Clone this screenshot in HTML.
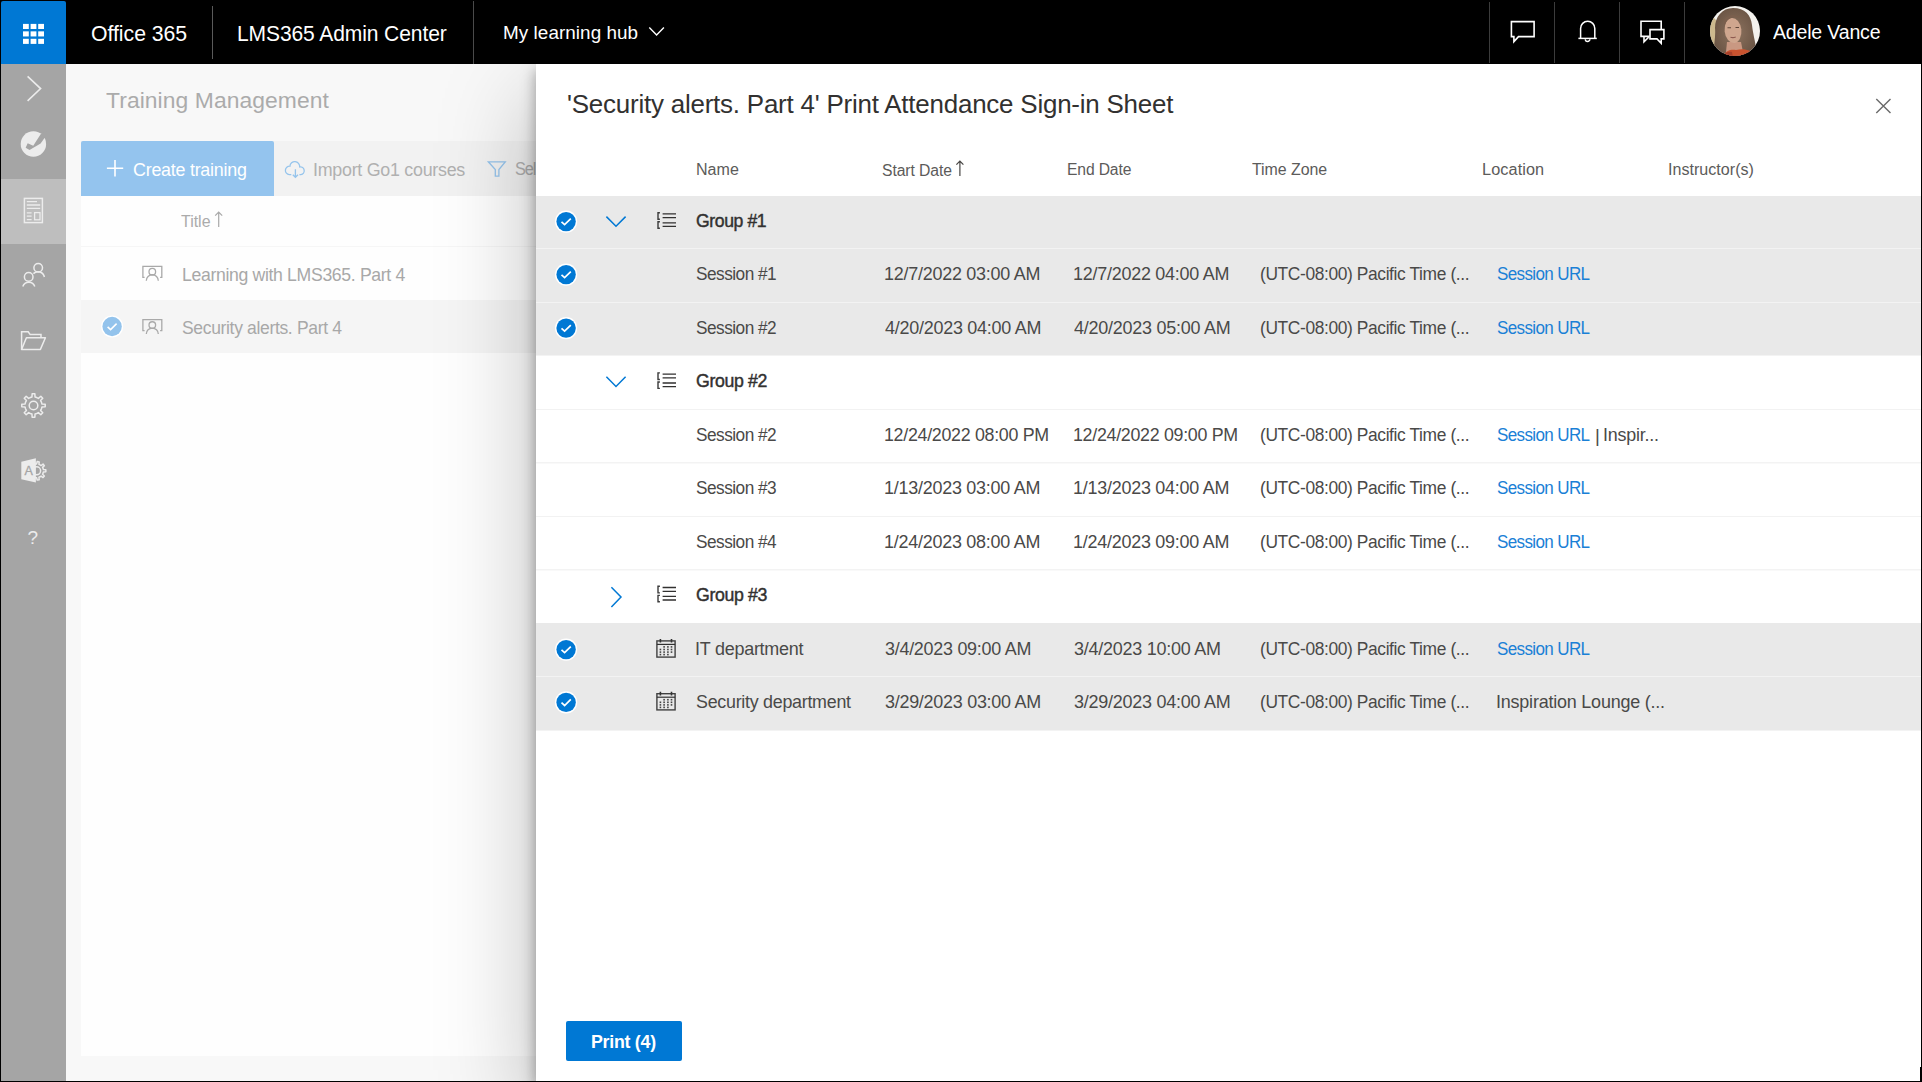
<!DOCTYPE html>
<html><head><meta charset="utf-8"><title>LMS365 Admin Center</title>
<style>
html,body{margin:0;padding:0}
body{width:1922px;height:1082px;overflow:hidden;position:relative;background:#000;font-family:"Liberation Sans",sans-serif}
.a{position:absolute}
.t{position:absolute;white-space:nowrap;font-family:"Liberation Sans",sans-serif}
svg{position:absolute;overflow:visible}
</style></head><body>

<!-- left rail + main content (dimmed by overlay) -->
<div class="a" style="left:0;top:0;z-index:0">
<div class="a" style="left:1px;top:64px;width:65px;height:1017px;background:#a5a5a5"></div>
<div class="a" style="left:1px;top:179px;width:65px;height:65px;background:#bebebe"></div>
<div class="a" style="left:66px;top:64px;width:470px;height:1017px;background:#f8f8f8"></div>
<div class="a" style="left:81px;top:141px;width:455px;height:55px;background:#f2f2f2"></div>
<div class="a" style="left:81px;top:141px;width:193px;height:55px;background:#94c4ee;border-radius:2px 2px 0 0"></div>
<div class="a" style="left:81px;top:196px;width:455px;height:860px;background:#fefefe"></div>
<div class="a" style="left:81px;top:246px;width:455px;height:1px;background:#f6f6f6"></div>
<div class="a" style="left:81px;top:300px;width:455px;height:53px;background:#f5f5f5"></div>
</div>
<div class="a" style="left:0;top:0;z-index:1"><svg width="1922" height="1082" style="left:0;top:0"><polyline points="27.6,76.3 40.6,88.6 27.6,100.9" fill="none" stroke="#ececec" stroke-width="1.6"/>
<circle cx="33.4" cy="144" r="12.7" fill="#ececec"/>
<polygon points="25.65,147.66 27.68,143.22 33.22,145.81 40.8,133.98 47.3,131.4 47.3,138.05 44.5,138.05 40.62,143.59 29.53,149.88" fill="#a5a5a5"/>
<rect x="24.4" y="198.4" width="18" height="24.2" fill="none" stroke="#ececec" stroke-width="1.5"/>
<path d="M26.8 201.6 H37 M26.8 205 H40.2 M26.8 208.4 H40.2 M26.8 212.8 H31.6 M26.8 216.2 H31.6 M26.8 219.6 H31.6" stroke="#ececec" stroke-width="1.3"/>
<rect x="34.6" y="212.6" width="5.4" height="7.2" fill="none" stroke="#ececec" stroke-width="1.3"/>
<circle cx="28.7" cy="276.9" r="4.3" fill="none" stroke="#ececec" stroke-width="1.5"/>
<path d="M22.8 286.6 A6.3 6.3 0 0 1 34.8 286.6" fill="none" stroke="#ececec" stroke-width="1.5"/>
<circle cx="38.2" cy="267.8" r="4.3" fill="none" stroke="#ececec" stroke-width="1.5"/>
<path d="M33.4 273.6 A6.5 6.5 0 0 1 44.4 277" fill="none" stroke="#ececec" stroke-width="1.5"/>
<path d="M21.6 349.4 V331.8 H28.2 L30.2 334.6 H41 V337.6" fill="none" stroke="#ececec" stroke-width="1.5"/>
<path d="M21.6 349.4 L26.4 337.8 H45.4 L40.4 349.4 Z" fill="none" stroke="#ececec" stroke-width="1.5" stroke-linejoin="round"/>
<path d="M41.45 402.21 L41.96 403.95 L45.22 404.14 L45.22 406.86 L41.96 407.05 L41.45 408.79 L40.58 410.38 L42.75 412.83 L40.83 414.75 L38.38 412.58 L36.79 413.45 L35.05 413.96 L34.86 417.22 L32.14 417.22 L31.95 413.96 L30.21 413.45 L28.62 412.58 L26.17 414.75 L24.25 412.83 L26.42 410.38 L25.55 408.79 L25.04 407.05 L21.78 406.86 L21.78 404.14 L25.04 403.95 L25.55 402.21 L26.42 400.62 L24.25 398.17 L26.17 396.25 L28.62 398.42 L30.21 397.55 L31.95 397.04 L32.14 393.78 L34.86 393.78 L35.05 397.04 L36.79 397.55 L38.38 398.42 L40.83 396.25 L42.75 398.17 L40.58 400.62 Z" fill="none" stroke="#ececec" stroke-width="1.5" stroke-linejoin="round"/>
<circle cx="33.5" cy="405.5" r="4.3" fill="none" stroke="#ececec" stroke-width="1.5"/>
<path d="M43.08 468.44 L43.40 469.61 L45.84 469.78 L45.84 471.82 L43.40 471.99 L43.08 473.16 L42.57 474.26 L44.34 475.96 L43.03 477.52 L41.04 476.08 L40.05 476.78 L38.95 477.29 L39.21 479.73 L37.20 480.08 L36.61 477.70 L35.40 477.60 L34.23 477.28 L32.86 479.32 L31.09 478.30 L32.17 476.09 L31.31 475.24 L30.62 474.24 L28.26 474.92 L27.56 473.00 L29.81 472.01 L29.70 470.80 L29.81 469.59 L27.56 468.60 L28.26 466.68 L30.62 467.36 L31.31 466.36 L32.17 465.51 L31.09 463.30 L32.86 462.28 L34.23 464.32 L35.40 464.00 L36.61 463.90 L37.20 461.52 L39.21 461.87 L38.95 464.31 L40.05 464.82 L41.04 465.52 L43.03 464.08 L44.34 465.64 L42.57 467.34 Z" fill="none" stroke="#ececec" stroke-width="1.5" stroke-linejoin="round"/>
<circle cx="36.6" cy="470.8" r="4.0" fill="none" stroke="#ececec" stroke-width="1.5"/>
<path d="M21.3 461.8 L35.9 458.2 V482.6 L21.3 479.3 Z" fill="#ececec"/>
<text x="24.6" y="475.3" font-family="Liberation Sans" font-size="12.5" fill="#a5a5a5" stroke="#a5a5a5" stroke-width="0.3">A</text>
<text x="27.6" y="543.8" font-family="Liberation Sans" font-size="19" fill="#ececec">?</text>
<path d="M115 160 V176.4 M106.9 168.2 H123.2" stroke="#fff" stroke-width="1.6"/>
<path d="M291.3 174.6 H289.3 A4.2 4.2 0 0 1 289.9 166.2 A4.7 4.7 0 0 1 299.7 166.9 A3.85 3.85 0 0 1 300.9 174.6 H299.4" fill="none" stroke="#95c4ec" stroke-width="1.3"/>
<path d="M295.4 169.3 V177.3 M292.8 174.7 L295.4 177.3 L298 174.7" fill="none" stroke="#95c4ec" stroke-width="1.3"/>
<path d="M488.3 161.8 H505.3 L498.9 169.6 V176.2 H495.3 V169.6 Z" fill="none" stroke="#95c4ec" stroke-width="1.3" stroke-linejoin="miter"/>
<path d="M218.7 227 V212.2 M215.2 215.6 L218.7 212 L222.2 215.6" fill="none" stroke="#a9a9a9" stroke-width="1.2"/>
<path d="M144.6 277.30 H142.9 V266.30 H161.8 V277.30 H160.1" fill="none" stroke="#a9a9a9" stroke-width="1.3"/>
<circle cx="152.3" cy="271.70" r="3.3" fill="none" stroke="#a9a9a9" stroke-width="1.3"/>
<path d="M146.3 280.70 A6 6 0 0 1 158.3 280.70" fill="none" stroke="#a9a9a9" stroke-width="1.3"/>
<path d="M144.6 330.63 H142.9 V319.63 H161.8 V330.63 H160.1" fill="none" stroke="#a9a9a9" stroke-width="1.3"/>
<circle cx="152.3" cy="325.03" r="3.3" fill="none" stroke="#a9a9a9" stroke-width="1.3"/>
<path d="M146.3 334.03 A6 6 0 0 1 158.3 334.03" fill="none" stroke="#a9a9a9" stroke-width="1.3"/>
<circle cx="112.1" cy="326.5" r="11" fill="#fff"/><circle cx="112.1" cy="326.5" r="9.7" fill="#93c3ec"/>
<polyline points="107.6,326.8 110.6,329.6 116.6,323.6" fill="none" stroke="#fff" stroke-width="1.6"/></svg><div class="t" style="left:105.90px;top:89.00px;font-size:22.67px;line-height:22.67px;font-weight:400;color:#ababab;letter-spacing:0.074px;transform:scaleX(1.0091);transform-origin:0 0;">Training Management</div>
<div class="t" style="left:133.20px;top:161.00px;font-size:18.67px;line-height:18.67px;font-weight:400;color:#fff;letter-spacing:-0.253px;transform:scaleX(0.9582);transform-origin:0 0;">Create training</div>
<div class="t" style="left:313.20px;top:161.00px;font-size:18.67px;line-height:18.67px;font-weight:400;color:#b0b0b0;letter-spacing:-0.283px;transform:scaleX(0.9575);transform-origin:0 0;">Import Go1 courses</div>
<div class="t" style="left:515.00px;top:160.00px;font-size:18.67px;line-height:18.67px;font-weight:400;color:#b0b0b0;letter-spacing:-1.214px;transform:scaleX(0.8764);transform-origin:0 0;">Sel</div>
<div class="t" style="left:181.00px;top:214.00px;font-size:16px;line-height:16px;font-weight:400;color:#ababab;letter-spacing:-0.013px;transform:scaleX(0.9973);transform-origin:0 0;">Title</div>
<div class="t" style="left:181.60px;top:266.00px;font-size:18.67px;line-height:18.67px;font-weight:400;color:#a8a8a8;letter-spacing:-0.351px;transform:scaleX(0.9450);transform-origin:0 0;">Learning with LMS365. Part 4</div>
<div class="t" style="left:182.40px;top:319.00px;font-size:18.67px;line-height:18.67px;font-weight:400;color:#a8a8a8;letter-spacing:-0.356px;transform:scaleX(0.9381);transform-origin:0 0;">Security alerts. Part 4</div></div>

<!-- panel -->
<div class="a" style="left:0;top:0;z-index:2">
<div class="a" style="left:536px;top:64px;width:1385px;height:1017px;background:#fff;box-shadow:0 34px 90px rgba(0,0,0,0.27), 0 6px 14px rgba(0,0,0,0.36)"></div>
<div class="a" style="left:536px;top:196px;width:1385px;height:159px;background:#e9e9e9"></div>
<div class="a" style="left:536px;top:355px;width:1385px;height:1px;background:#f3f3f3"></div>
<div class="a" style="left:536px;top:248px;width:1385px;height:1px;background:#f3f3f3"></div>
<div class="a" style="left:536px;top:302px;width:1385px;height:1px;background:#f3f3f3"></div>
<div class="a" style="left:536px;top:409px;width:1385px;height:1px;background:#f2f2f2"></div>
<div class="a" style="left:536px;top:462px;width:1385px;height:1px;background:#f3f3f3"></div>
<div class="a" style="left:536px;top:463px;width:1385px;height:1px;background:#f9f9f9"></div>
<div class="a" style="left:536px;top:516px;width:1385px;height:1px;background:#f2f2f2"></div>
<div class="a" style="left:536px;top:569px;width:1385px;height:1px;background:#f3f3f3"></div>
<div class="a" style="left:536px;top:570px;width:1385px;height:1px;background:#f9f9f9"></div>
<div class="a" style="left:536px;top:623px;width:1385px;height:107px;background:#e9e9e9"></div>
<div class="a" style="left:536px;top:676px;width:1385px;height:1px;background:#f3f3f3"></div>
<div class="a" style="left:536px;top:730px;width:1385px;height:1px;background:#f3f3f3"></div>
<div class="a" style="left:566px;top:1021px;width:116px;height:40px;background:#0078d4;border-radius:2px"></div>
</div>
<div class="a" style="left:0;top:0;z-index:3"><svg width="1922" height="1082" style="left:0;top:0"><circle cx="566.1" cy="221.60" r="11.1" fill="#fff"/><circle cx="566.1" cy="221.60" r="9.7" fill="#0078d4"/>
<polyline points="561.5,221.90 564.6,224.70 570.8,218.60" fill="none" stroke="#fff" stroke-width="1.7"/>
<circle cx="566.1" cy="274.60" r="11.1" fill="#fff"/><circle cx="566.1" cy="274.60" r="9.7" fill="#0078d4"/>
<polyline points="561.5,274.90 564.6,277.70 570.8,271.60" fill="none" stroke="#fff" stroke-width="1.7"/>
<circle cx="566.1" cy="328.10" r="11.1" fill="#fff"/><circle cx="566.1" cy="328.10" r="9.7" fill="#0078d4"/>
<polyline points="561.5,328.40 564.6,331.20 570.8,325.10" fill="none" stroke="#fff" stroke-width="1.7"/>
<circle cx="566.1" cy="649.60" r="11.1" fill="#fff"/><circle cx="566.1" cy="649.60" r="9.7" fill="#0078d4"/>
<polyline points="561.5,649.90 564.6,652.70 570.8,646.60" fill="none" stroke="#fff" stroke-width="1.7"/>
<circle cx="566.1" cy="702.40" r="11.1" fill="#fff"/><circle cx="566.1" cy="702.40" r="9.7" fill="#0078d4"/>
<polyline points="561.5,702.70 564.6,705.50 570.8,699.40" fill="none" stroke="#fff" stroke-width="1.7"/>
<polyline points="606.4,216.60 616,226.30 625.6,216.60" fill="none" stroke="#0078d4" stroke-width="1.5"/>
<path d="M659.9 212.70 H658 V219.30 H659.9 M659.9 221.80 H658 V228.20 H659.9" fill="none" stroke="#3a3a3a" stroke-width="1.4"/>
<path d="M662.6 213.90 H676 M662.6 217.70 H676 M662.6 222.80 H676 M662.6 226.40 H676" fill="none" stroke="#323130" stroke-width="1.3"/>
<polyline points="606.4,376.80 616,386.50 625.6,376.80" fill="none" stroke="#0078d4" stroke-width="1.5"/>
<path d="M659.9 372.90 H658 V379.50 H659.9 M659.9 382.00 H658 V388.40 H659.9" fill="none" stroke="#3a3a3a" stroke-width="1.4"/>
<path d="M662.6 374.10 H676 M662.6 377.90 H676 M662.6 383.00 H676 M662.6 386.60 H676" fill="none" stroke="#323130" stroke-width="1.3"/>
<polyline points="611.4,587.30 621,597.10 611.4,606.90" fill="none" stroke="#0078d4" stroke-width="1.5"/>
<path d="M659.9 586.30 H658 V592.90 H659.9 M659.9 595.40 H658 V601.80 H659.9" fill="none" stroke="#3a3a3a" stroke-width="1.4"/>
<path d="M662.6 587.50 H676 M662.6 591.30 H676 M662.6 596.40 H676 M662.6 600.00 H676" fill="none" stroke="#323130" stroke-width="1.3"/>
<rect x="656.9" y="640.90" width="18.2" height="16.2" fill="none" stroke="#404040" stroke-width="1.4"/>
<path d="M656.9 644.40 H675.1" fill="none" stroke="#303030" stroke-width="1.2"/>
<path d="M660.4 639.00 V642.60 M671.5 639.00 V642.60" fill="none" stroke="#333" stroke-width="1.6"/>
<rect x="663.30" y="646.10" width="1.6" height="1.6" fill="#444"/><rect x="667.10" y="646.10" width="1.6" height="1.6" fill="#444"/><rect x="670.70" y="646.10" width="1.6" height="1.6" fill="#444"/><rect x="659.60" y="648.70" width="1.6" height="1.6" fill="#444"/><rect x="663.30" y="648.70" width="1.6" height="1.6" fill="#444"/><rect x="667.10" y="648.70" width="1.6" height="1.6" fill="#444"/><rect x="670.70" y="648.70" width="1.6" height="1.6" fill="#444"/><rect x="659.60" y="651.30" width="1.6" height="1.6" fill="#444"/><rect x="663.30" y="651.30" width="1.6" height="1.6" fill="#444"/><rect x="667.10" y="651.30" width="1.6" height="1.6" fill="#444"/><rect x="670.70" y="651.30" width="1.6" height="1.6" fill="#444"/><rect x="659.60" y="653.80" width="1.6" height="1.6" fill="#444"/><rect x="663.30" y="653.80" width="1.6" height="1.6" fill="#444"/><rect x="667.10" y="653.80" width="1.6" height="1.6" fill="#444"/>
<rect x="656.9" y="693.70" width="18.2" height="16.2" fill="none" stroke="#404040" stroke-width="1.4"/>
<path d="M656.9 697.20 H675.1" fill="none" stroke="#303030" stroke-width="1.2"/>
<path d="M660.4 691.80 V695.40 M671.5 691.80 V695.40" fill="none" stroke="#333" stroke-width="1.6"/>
<rect x="663.30" y="698.90" width="1.6" height="1.6" fill="#444"/><rect x="667.10" y="698.90" width="1.6" height="1.6" fill="#444"/><rect x="670.70" y="698.90" width="1.6" height="1.6" fill="#444"/><rect x="659.60" y="701.50" width="1.6" height="1.6" fill="#444"/><rect x="663.30" y="701.50" width="1.6" height="1.6" fill="#444"/><rect x="667.10" y="701.50" width="1.6" height="1.6" fill="#444"/><rect x="670.70" y="701.50" width="1.6" height="1.6" fill="#444"/><rect x="659.60" y="704.10" width="1.6" height="1.6" fill="#444"/><rect x="663.30" y="704.10" width="1.6" height="1.6" fill="#444"/><rect x="667.10" y="704.10" width="1.6" height="1.6" fill="#444"/><rect x="670.70" y="704.10" width="1.6" height="1.6" fill="#444"/><rect x="659.60" y="706.60" width="1.6" height="1.6" fill="#444"/><rect x="663.30" y="706.60" width="1.6" height="1.6" fill="#444"/><rect x="667.10" y="706.60" width="1.6" height="1.6" fill="#444"/>
<path d="M1876.3 98.9 L1890.5 113.1 M1890.5 98.9 L1876.3 113.1" stroke="#6a6a6a" stroke-width="1.4"/>
<path d="M959.9 176 V161.2 M956.4 164.6 L959.9 161 L963.4 164.6" fill="none" stroke="#484644" stroke-width="1.2"/></svg><div class="t" style="left:566.80px;top:91.00px;font-size:26.67px;line-height:26.67px;font-weight:400;color:#323130;letter-spacing:-0.217px;transform:scaleX(0.9726);transform-origin:0 0;">&#x27;Security alerts. Part 4&#x27; Print Attendance Sign-in Sheet</div>
<div class="t" style="left:695.80px;top:162.00px;font-size:16px;line-height:16px;font-weight:400;color:#5c5b5a;letter-spacing:0.016px;transform:scaleX(1.0017);transform-origin:0 0;">Name</div>
<div class="t" style="left:881.60px;top:163.00px;font-size:16px;line-height:16px;font-weight:400;color:#5c5b5a;letter-spacing:-0.097px;transform:scaleX(0.9823);transform-origin:0 0;">Start Date</div>
<div class="t" style="left:1066.60px;top:162.00px;font-size:16px;line-height:16px;font-weight:400;color:#5c5b5a;letter-spacing:-0.135px;transform:scaleX(0.9789);transform-origin:0 0;">End Date</div>
<div class="t" style="left:1251.90px;top:162.00px;font-size:16px;line-height:16px;font-weight:400;color:#5c5b5a;letter-spacing:-0.034px;transform:scaleX(0.9947);transform-origin:0 0;">Time Zone</div>
<div class="t" style="left:1482.40px;top:162.00px;font-size:16px;line-height:16px;font-weight:400;color:#5c5b5a;letter-spacing:0.090px;transform:scaleX(1.0164);transform-origin:0 0;">Location</div>
<div class="t" style="left:1668.00px;top:162.00px;font-size:16px;line-height:16px;font-weight:400;color:#5c5b5a;letter-spacing:0.019px;transform:scaleX(1.0042);transform-origin:0 0;">Instructor(s)</div>
<div class="t" style="left:696.20px;top:212.00px;font-size:18.67px;line-height:18.67px;font-weight:400;color:#323130;letter-spacing:-0.436px;transform:scaleX(0.9441);transform-origin:0 0;-webkit-text-stroke:0.45px #323130;">Group #1</div>
<div class="t" style="left:696.00px;top:265.00px;font-size:18.67px;line-height:18.67px;font-weight:400;color:#4a4948;letter-spacing:-0.559px;transform:scaleX(0.9241);transform-origin:0 0;">Session #1</div>
<div class="t" style="left:884.40px;top:265.00px;font-size:18.67px;line-height:18.67px;font-weight:400;color:#4a4948;letter-spacing:-0.257px;transform:scaleX(0.9622);transform-origin:0 0;">12/7/2022 03:00 AM</div>
<div class="t" style="left:1072.90px;top:265.00px;font-size:18.67px;line-height:18.67px;font-weight:400;color:#4a4948;letter-spacing:-0.257px;transform:scaleX(0.9622);transform-origin:0 0;">12/7/2022 04:00 AM</div>
<div class="t" style="left:1260.40px;top:265.00px;font-size:18.67px;line-height:18.67px;font-weight:400;color:#4a4948;letter-spacing:-0.410px;transform:scaleX(0.9317);transform-origin:0 0;">(UTC-08:00) Pacific Time (...</div>
<div class="t" style="left:1496.70px;top:265.00px;font-size:18.67px;line-height:18.67px;font-weight:400;color:#1a80d6;letter-spacing:-0.693px;transform:scaleX(0.9126);transform-origin:0 0;">Session URL</div>
<div class="t" style="left:696.00px;top:319.00px;font-size:18.67px;line-height:18.67px;font-weight:400;color:#4a4948;letter-spacing:-0.559px;transform:scaleX(0.9241);transform-origin:0 0;">Session #2</div>
<div class="t" style="left:885.40px;top:319.00px;font-size:18.67px;line-height:18.67px;font-weight:400;color:#4a4948;letter-spacing:-0.259px;transform:scaleX(0.9621);transform-origin:0 0;">4/20/2023 04:00 AM</div>
<div class="t" style="left:1073.90px;top:319.00px;font-size:18.67px;line-height:18.67px;font-weight:400;color:#4a4948;letter-spacing:-0.254px;transform:scaleX(0.9628);transform-origin:0 0;">4/20/2023 05:00 AM</div>
<div class="t" style="left:1260.40px;top:319.00px;font-size:18.67px;line-height:18.67px;font-weight:400;color:#4a4948;letter-spacing:-0.410px;transform:scaleX(0.9317);transform-origin:0 0;">(UTC-08:00) Pacific Time (...</div>
<div class="t" style="left:1496.70px;top:319.00px;font-size:18.67px;line-height:18.67px;font-weight:400;color:#1a80d6;letter-spacing:-0.693px;transform:scaleX(0.9126);transform-origin:0 0;">Session URL</div>
<div class="t" style="left:696.20px;top:372.00px;font-size:18.67px;line-height:18.67px;font-weight:400;color:#323130;letter-spacing:-0.385px;transform:scaleX(0.9503);transform-origin:0 0;-webkit-text-stroke:0.45px #323130;">Group #2</div>
<div class="t" style="left:696.00px;top:426.00px;font-size:18.67px;line-height:18.67px;font-weight:400;color:#4a4948;letter-spacing:-0.559px;transform:scaleX(0.9241);transform-origin:0 0;">Session #2</div>
<div class="t" style="left:884.40px;top:426.00px;font-size:18.67px;line-height:18.67px;font-weight:400;color:#4a4948;letter-spacing:-0.306px;transform:scaleX(0.9553);transform-origin:0 0;">12/24/2022 08:00 PM</div>
<div class="t" style="left:1072.90px;top:426.00px;font-size:18.67px;line-height:18.67px;font-weight:400;color:#4a4948;letter-spacing:-0.306px;transform:scaleX(0.9553);transform-origin:0 0;">12/24/2022 09:00 PM</div>
<div class="t" style="left:1260.40px;top:426.00px;font-size:18.67px;line-height:18.67px;font-weight:400;color:#4a4948;letter-spacing:-0.410px;transform:scaleX(0.9317);transform-origin:0 0;">(UTC-08:00) Pacific Time (...</div>
<div class="t" style="left:1496.70px;top:426.00px;font-size:18.67px;line-height:18.67px;font-weight:400;color:#1a80d6;letter-spacing:-0.693px;transform:scaleX(0.9126);transform-origin:0 0;">Session URL</div>
<div class="t" style="left:1595.00px;top:427.00px;font-size:18.67px;line-height:18.67px;font-weight:400;color:#4a4948;letter-spacing:0.000px;">|</div>
<div class="t" style="left:1603.40px;top:426.00px;font-size:18.67px;line-height:18.67px;font-weight:400;color:#4a4948;letter-spacing:-0.212px;transform:scaleX(0.9580);transform-origin:0 0;">Inspir...</div>
<div class="t" style="left:696.00px;top:479.00px;font-size:18.67px;line-height:18.67px;font-weight:400;color:#4a4948;letter-spacing:-0.559px;transform:scaleX(0.9241);transform-origin:0 0;">Session #3</div>
<div class="t" style="left:884.40px;top:479.00px;font-size:18.67px;line-height:18.67px;font-weight:400;color:#4a4948;letter-spacing:-0.257px;transform:scaleX(0.9622);transform-origin:0 0;">1/13/2023 03:00 AM</div>
<div class="t" style="left:1072.90px;top:479.00px;font-size:18.67px;line-height:18.67px;font-weight:400;color:#4a4948;letter-spacing:-0.257px;transform:scaleX(0.9622);transform-origin:0 0;">1/13/2023 04:00 AM</div>
<div class="t" style="left:1260.40px;top:479.00px;font-size:18.67px;line-height:18.67px;font-weight:400;color:#4a4948;letter-spacing:-0.410px;transform:scaleX(0.9317);transform-origin:0 0;">(UTC-08:00) Pacific Time (...</div>
<div class="t" style="left:1496.70px;top:479.00px;font-size:18.67px;line-height:18.67px;font-weight:400;color:#1a80d6;letter-spacing:-0.693px;transform:scaleX(0.9126);transform-origin:0 0;">Session URL</div>
<div class="t" style="left:696.00px;top:533.00px;font-size:18.67px;line-height:18.67px;font-weight:400;color:#4a4948;letter-spacing:-0.559px;transform:scaleX(0.9241);transform-origin:0 0;">Session #4</div>
<div class="t" style="left:884.40px;top:533.00px;font-size:18.67px;line-height:18.67px;font-weight:400;color:#4a4948;letter-spacing:-0.257px;transform:scaleX(0.9622);transform-origin:0 0;">1/24/2023 08:00 AM</div>
<div class="t" style="left:1072.90px;top:533.00px;font-size:18.67px;line-height:18.67px;font-weight:400;color:#4a4948;letter-spacing:-0.257px;transform:scaleX(0.9622);transform-origin:0 0;">1/24/2023 09:00 AM</div>
<div class="t" style="left:1260.40px;top:533.00px;font-size:18.67px;line-height:18.67px;font-weight:400;color:#4a4948;letter-spacing:-0.410px;transform:scaleX(0.9317);transform-origin:0 0;">(UTC-08:00) Pacific Time (...</div>
<div class="t" style="left:1496.70px;top:533.00px;font-size:18.67px;line-height:18.67px;font-weight:400;color:#1a80d6;letter-spacing:-0.693px;transform:scaleX(0.9126);transform-origin:0 0;">Session URL</div>
<div class="t" style="left:696.20px;top:586.00px;font-size:18.67px;line-height:18.67px;font-weight:400;color:#323130;letter-spacing:-0.385px;transform:scaleX(0.9503);transform-origin:0 0;-webkit-text-stroke:0.45px #323130;">Group #3</div>
<div class="t" style="left:695.00px;top:640.00px;font-size:18.67px;line-height:18.67px;font-weight:400;color:#4a4948;letter-spacing:-0.251px;transform:scaleX(0.9625);transform-origin:0 0;">IT department</div>
<div class="t" style="left:885.40px;top:640.00px;font-size:18.67px;line-height:18.67px;font-weight:400;color:#4a4948;letter-spacing:-0.269px;transform:scaleX(0.9606);transform-origin:0 0;">3/4/2023 09:00 AM</div>
<div class="t" style="left:1073.90px;top:640.00px;font-size:18.67px;line-height:18.67px;font-weight:400;color:#4a4948;letter-spacing:-0.252px;transform:scaleX(0.9629);transform-origin:0 0;">3/4/2023 10:00 AM</div>
<div class="t" style="left:1260.40px;top:640.00px;font-size:18.67px;line-height:18.67px;font-weight:400;color:#4a4948;letter-spacing:-0.410px;transform:scaleX(0.9317);transform-origin:0 0;">(UTC-08:00) Pacific Time (...</div>
<div class="t" style="left:1496.70px;top:640.00px;font-size:18.67px;line-height:18.67px;font-weight:400;color:#1a80d6;letter-spacing:-0.693px;transform:scaleX(0.9126);transform-origin:0 0;">Session URL</div>
<div class="t" style="left:696.00px;top:693.00px;font-size:18.67px;line-height:18.67px;font-weight:400;color:#4a4948;letter-spacing:-0.278px;transform:scaleX(0.9572);transform-origin:0 0;">Security department</div>
<div class="t" style="left:885.40px;top:693.00px;font-size:18.67px;line-height:18.67px;font-weight:400;color:#4a4948;letter-spacing:-0.267px;transform:scaleX(0.9610);transform-origin:0 0;">3/29/2023 03:00 AM</div>
<div class="t" style="left:1073.90px;top:693.00px;font-size:18.67px;line-height:18.67px;font-weight:400;color:#4a4948;letter-spacing:-0.249px;transform:scaleX(0.9635);transform-origin:0 0;">3/29/2023 04:00 AM</div>
<div class="t" style="left:1260.40px;top:693.00px;font-size:18.67px;line-height:18.67px;font-weight:400;color:#4a4948;letter-spacing:-0.410px;transform:scaleX(0.9317);transform-origin:0 0;">(UTC-08:00) Pacific Time (...</div>
<div class="t" style="left:1496.40px;top:693.00px;font-size:18.67px;line-height:18.67px;font-weight:400;color:#4a4948;letter-spacing:-0.213px;transform:scaleX(0.9621);transform-origin:0 0;">Inspiration Lounge (...</div>
<div class="t" style="left:590.80px;top:1033.00px;font-size:18.67px;line-height:18.67px;font-weight:700;color:#fff;letter-spacing:-0.281px;transform:scaleX(0.9535);transform-origin:0 0;">Print (4)</div></div>

<!-- header -->
<div class="a" style="left:0;top:0;z-index:4">
<div class="a" style="left:0;top:0;width:1922px;height:64px;background:#000"></div>
<div class="a" style="left:1px;top:1px;width:65px;height:63px;background:#0078d4;border-radius:2px 2px 0 0"></div>
<div class="a" style="left:212px;top:6px;width:1px;height:53px;background:#5a5a5a"></div>
<div class="a" style="left:473px;top:1px;width:1px;height:63px;background:#4a4a4a"></div>
<div class="a" style="left:1489px;top:2px;width:1px;height:61px;background:#3c3c3c"></div>
<div class="a" style="left:1554px;top:2px;width:1px;height:61px;background:#3c3c3c"></div>
<div class="a" style="left:1619px;top:2px;width:1px;height:61px;background:#3c3c3c"></div>
<div class="a" style="left:1684px;top:2px;width:1px;height:61px;background:#3c3c3c"></div>
</div>
<div class="a" style="left:1920px;top:1067px;width:2px;height:15px;background:#000;z-index:6"></div>
<div class="a" style="left:0;top:0;z-index:5"><svg width="1922" height="1082" style="left:0;top:0"><rect x="23.00" y="23.90" width="5.8" height="5.1" fill="#fff"/>
<rect x="30.60" y="23.90" width="5.8" height="5.1" fill="#fff"/>
<rect x="38.20" y="23.90" width="5.8" height="5.1" fill="#fff"/>
<rect x="23.00" y="31.35" width="5.8" height="5.1" fill="#fff"/>
<rect x="30.60" y="31.35" width="5.8" height="5.1" fill="#fff"/>
<rect x="38.20" y="31.35" width="5.8" height="5.1" fill="#fff"/>
<rect x="23.00" y="38.80" width="5.8" height="5.1" fill="#fff"/>
<rect x="30.60" y="38.80" width="5.8" height="5.1" fill="#fff"/>
<rect x="38.20" y="38.80" width="5.8" height="5.1" fill="#fff"/>
<polyline points="649.3,27.6 656.6,34.9 663.9,27.6" fill="none" stroke="#fff" stroke-width="1.4"/>
<path d="M1511.4 21.6 H1534.1 V36.6 H1518.5 L1513.9 41.6 V36.6 H1511.4 Z" fill="none" stroke="#fff" stroke-width="1.6" stroke-linejoin="miter"/>
<path d="M1580.6 38.2 V28.4 A7.1 7.1 0 0 1 1594.8 28.4 V38.2" fill="none" stroke="#fff" stroke-width="1.5"/>
<path d="M1578.4 38.4 H1596.8" fill="none" stroke="#fff" stroke-width="1.5"/>
<path d="M1585.3 39.2 A2.3 2.3 0 0 0 1589.9 39.2" fill="none" stroke="#fff" stroke-width="1.4"/>
<path d="M1649.5 36.4 H1644 V41.8 L1648.6 37.2 M1644 36.4 H1641 V21.2 H1661.2 V29" fill="none" stroke="#fff" stroke-width="1.6"/>
<path d="M1650 29.6 H1663.9 V38.9 H1661.2 V43.2 L1657 38.9 H1650 Z" fill="none" stroke="#fff" stroke-width="1.6"/>
<defs><clipPath id="av"><circle cx="1735" cy="31" r="25"/></clipPath>
<radialGradient id="hair" cx="0.5" cy="0.5" r="0.55"><stop offset="0" stop-color="#8d735f"/><stop offset="1" stop-color="#6a5444"/></radialGradient></defs>
<g clip-path="url(#av)">
<rect x="1709" y="5" width="52" height="52" fill="#f4f2ee"/>
<path d="M1710 18 C1714 16 1718 20 1718 30 C1718 40 1716 48 1712 50 L1709 50 Z" fill="#cdb98e"/>
<path d="M1714 58 C1713 46 1716 38 1715 28 C1715 17 1722 8 1733 8 C1745 8 1751 15 1752 25 C1753 34 1755 40 1756 48 C1757 53 1754 58 1752 58 Z" fill="url(#hair)"/>
<path d="M1727 42 L1741 42 L1743 52 L1726 52 Z" fill="#c99882"/>
<ellipse cx="1733" cy="30.5" rx="8.4" ry="12.6" fill="#cfa68e" transform="rotate(-6 1733 30.5)"/>
<path d="M1724 20 C1727 14 1738 13 1742 19 C1740 17 1734 16 1729 19 C1726 21 1725 24 1724 27 Z" fill="#7a5f4d"/>
<path d="M1722 58 C1725 51 1730 49 1736 50 C1745 48 1752 50 1758 58 Z" fill="#c9532f"/>
<path d="M1722 58 C1724 53 1728 51 1732 52 L1733 58 Z" fill="#a8402a"/>
<path d="M1727.5 27.8 h3.5 M1735.5 27.5 h3.5" stroke="#5e4538" stroke-width="1.1"/>
<path d="M1730.5 37.2 q2.6 0.9 5.2 -0.2" stroke="#8e5a50" stroke-width="1.2" fill="none"/>
</g></svg><div class="t" style="left:90.90px;top:24.00px;font-size:21.33px;line-height:21.33px;font-weight:400;color:#fff;letter-spacing:-0.030px;transform:scaleX(0.9958);transform-origin:0 0;">Office 365</div>
<div class="t" style="left:236.60px;top:24.00px;font-size:21.33px;line-height:21.33px;font-weight:400;color:#fff;letter-spacing:-0.109px;transform:scaleX(0.9864);transform-origin:0 0;">LMS365 Admin Center</div>
<div class="t" style="left:503.40px;top:24.00px;font-size:18.67px;line-height:18.67px;font-weight:400;color:#fff;letter-spacing:0.066px;transform:scaleX(1.0107);transform-origin:0 0;">My learning hub</div>
<div class="t" style="left:1772.70px;top:22.00px;font-size:20px;line-height:20px;font-weight:400;color:#fff;letter-spacing:-0.181px;transform:scaleX(0.9763);transform-origin:0 0;">Adele Vance</div></div>
</body></html>
